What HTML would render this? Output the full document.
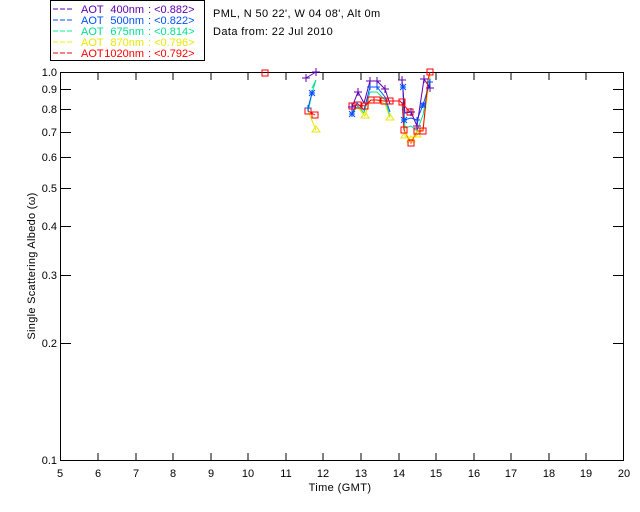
<!DOCTYPE html>
<html><head><style>
body{margin:0;background:#fff;width:640px;height:512px;overflow:hidden}
svg{display:block}
text{font-family:"Liberation Sans",sans-serif;font-size:11px}
</style></head><body>
<svg width="640" height="512" xmlns="http://www.w3.org/2000/svg">
<rect x="50.5" y="0.5" width="154" height="60" fill="none" stroke="#000"/>
<g font-size="11">
<line x1="53" y1="9" x2="73" y2="9" stroke="#6000b0" stroke-dasharray="5,2"/>
<g fill="#6000b0"><text x="81" y="13">AOT</text><text x="144" y="13" text-anchor="end">400nm</text><text x="148" y="13">: &lt;0.882&gt;</text></g>
<line x1="53" y1="20" x2="73" y2="20" stroke="#0050ff" stroke-dasharray="5,2"/>
<g fill="#0050ff"><text x="81" y="24">AOT</text><text x="144" y="24" text-anchor="end">500nm</text><text x="148" y="24">: &lt;0.822&gt;</text></g>
<line x1="53" y1="31" x2="73" y2="31" stroke="#00f090" stroke-dasharray="5,2"/>
<g fill="#00e090"><text x="81" y="35">AOT</text><text x="144" y="35" text-anchor="end">675nm</text><text x="148" y="35">: &lt;0.814&gt;</text></g>
<line x1="53" y1="42" x2="73" y2="42" stroke="#f0f000" stroke-dasharray="5,2"/>
<g fill="#e8e800"><text x="81" y="46">AOT</text><text x="144" y="46" text-anchor="end">870nm</text><text x="148" y="46">: &lt;0.796&gt;</text></g>
<line x1="53" y1="53" x2="73" y2="53" stroke="#f00" stroke-dasharray="5,2"/>
<g fill="#f00"><text x="81" y="57">AOT</text><text x="144" y="57" text-anchor="end">1020nm</text><text x="148" y="57">: &lt;0.792&gt;</text></g>
</g>
<text x="213" y="17" letter-spacing="0.4">PML, N 50 22', W 04 08', Alt 0m</text>
<text x="213" y="35" letter-spacing="0.4">Data from: 22 Jul 2010</text>
<g stroke="#000" fill="none">
<rect x="60.5" y="72.5" width="563" height="388"/>
<path d="M98 73v7M136 73v7M173 73v7M211 73v7M248 73v7M286 73v7M323 73v7M361 73v7M399 73v7M436 73v7M474 73v7M511 73v7M549 73v7M586 73v7
M98 460v-7M136 460v-7M173 460v-7M211 460v-7M248 460v-7M286 460v-7M323 460v-7M361 460v-7M399 460v-7M436 460v-7M474 460v-7M511 460v-7M549 460v-7M586 460v-7
M61 89.5h10M61 109.5h10M61 132.5h10M61 157.5h10M61 188.5h10M61 226.5h10M61 275.5h10M61 343.5h10
M623 89.5h-10M623 109.5h-10M623 132.5h-10M623 157.5h-10M623 188.5h-10M623 226.5h-10M623 275.5h-10M623 343.5h-10"/>
</g>
<g font-size="10" text-anchor="end">
<text x="57" y="76">1.0</text><text x="57" y="93">0.9</text><text x="57" y="113">0.8</text>
<text x="57" y="136">0.7</text><text x="57" y="161">0.6</text><text x="57" y="192">0.5</text>
<text x="57" y="230">0.4</text><text x="57" y="279">0.3</text><text x="57" y="347">0.2</text>
<text x="57" y="464">0.1</text>
</g>
<g font-size="10" text-anchor="middle">
<text x="60" y="477">5</text><text x="98" y="477">6</text><text x="136" y="477">7</text><text x="173" y="477">8</text>
<text x="211" y="477">9</text><text x="248" y="477">10</text><text x="286" y="477">11</text><text x="323" y="477">12</text>
<text x="361" y="477">13</text><text x="399" y="477">14</text><text x="436" y="477">15</text><text x="474" y="477">16</text>
<text x="511" y="477">17</text><text x="549" y="477">18</text><text x="586" y="477">19</text><text x="624" y="477">20</text>
<text x="340" y="491" letter-spacing="0.4">Time (GMT)</text>
</g>
<text transform="translate(35 266) rotate(-90)" font-size="10" text-anchor="middle" letter-spacing="0.3">Single Scattering Albedo (ω)</text>
<g fill="none" stroke-width="1">
<polyline stroke="#e8e800" points="308,111 316,130"/>
<polyline stroke="#e8e800" points="352,110 358,108 365,116 370,100 377,100 385,104 390,118"/>
<polyline stroke="#e8e800" points="403,100 405,136 411,140 417,135 423,128 430,76"/>
<polyline stroke="#00e090" points="312,88 316,80 312,93 308,112"/>
<polyline stroke="#00e090" points="352,113 358,106 364,113 370,92 377,92 385,100 390,116"/>
<polyline stroke="#00e090" points="403,92 405,128 411,126 417,131 423,115 430,78"/>
<polyline stroke="#0050ff" points="312,93 308,108"/>
<polyline stroke="#0050ff" points="352,114 357,103 364,110 370,87 377,87 385,97 390,112"/>
<polyline stroke="#0050ff" points="403,87 404,120 411,118 417,120 423,105 430,82"/>
<polyline stroke="#6000b0" points="306,78 316,72"/>
<polyline stroke="#6000b0" points="352,107 358,92 364,103 370,81 377,81 385,89 390,104"/>
<polyline stroke="#6000b0" points="402,80 405,113 411,112 417,126 424,79 430,88"/>
<polyline stroke="#f00" points="308,111 315,115"/>
<polyline stroke="#f00" points="352,106 358,105 365,106 371,100 377,100 384,101 392,101 400,101 410,112"/>
<polyline stroke="#f00" points="402,102 404,130 411,143 417,131 423,131 428,80 430,72"/>
</g>
<g fill="none" stroke="#e8e800">
<path d="M316 126l-4 6h8zM365 112l-4 6h8zM390 114l-4 6h8zM405 132l-4 6h8zM411 136l-4 6h8zM417 131l-4 6h8z"/>
</g>
<g fill="none" stroke="#f00">
<rect x="262" y="70" width="6" height="6"/><rect x="305" y="108" width="6" height="6"/><rect x="312" y="112" width="6" height="6"/>
<rect x="349" y="103" width="6" height="6"/><rect x="355" y="102" width="6" height="6"/><rect x="362" y="103" width="6" height="6"/>
<rect x="368" y="97" width="6" height="6"/><rect x="374" y="97" width="6" height="6"/><rect x="381" y="98" width="6" height="6"/>
<rect x="387" y="98" width="6" height="6"/><rect x="407" y="109" width="6" height="6"/>
<rect x="399" y="99" width="6" height="6"/><rect x="401" y="127" width="6" height="6"/><rect x="408" y="140" width="6" height="6"/>
<rect x="414" y="128" width="6" height="6"/><rect x="420" y="128" width="6" height="6"/><rect x="427" y="69" width="6" height="6"/>
</g>
<g stroke="#6000b0">
<path d="M302 78h8M306 74v8M312 72h8M316 68v8M348 107h8M352 103v8M354 92h8M358 88v8M366 81h8M370 77v8M373 81h8M377 77v8M381 89h8M385 85v8M398 80h8M402 76v8M407 112h8M411 108v8M420 79h8M424 75v8M426 88h8M430 84v8M413 126h8M417 122v8"/>
</g>
<g stroke="#0050ff">
<path d="M309 93h6M312 90v6M305 108h6M308 105v6M309 90l6 6M315 90l-6 6M349 114h6M352 111v6M367 87h6M370 84v6M374 87h6M377 84v6M400 87h6M403 84v6M401 120h6M404 117v6M414 120h6M417 117v6M420 105h6M423 102v6M427 82h6M430 79v6M349 111l6 6M355 111l-6 6M400 84l6 6M406 84l-6 6M401 117l6 6M407 117l-6 6M420 102l6 6M426 102l-6 6"/>
</g>
</svg>
</body></html>
